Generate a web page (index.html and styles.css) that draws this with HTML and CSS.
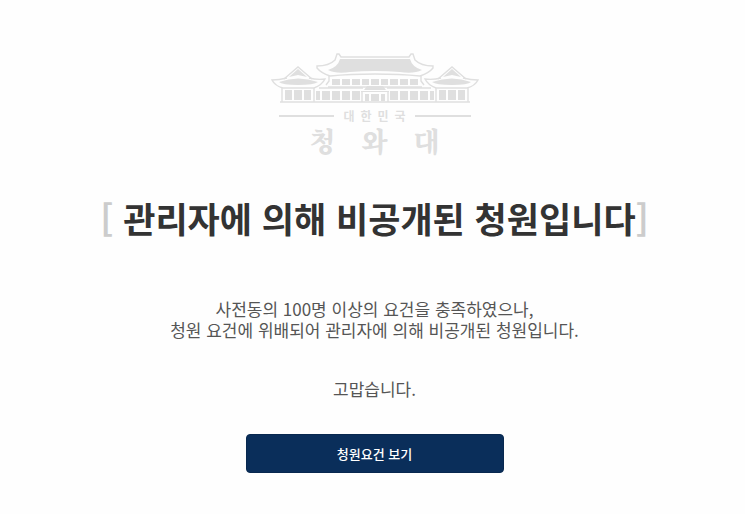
FILE: index.html
```html
<!DOCTYPE html>
<html lang="ko">
<head>
    <meta charset="UTF-8">
    <meta name="viewport" content="width=device-width, initial-scale=1.0">
    <title>청와대 국민청원</title>
    <link rel="stylesheet" href="styles.css">
</head>
<body>
    <main class="notice">
        <div class="logo">
            <svg class="logo-house" viewBox="0 0 210 54" aria-hidden="true">
                <defs>
                    <g id="half">
                        <!-- main hall roof -->
                        <path class="line" d="M105 7H71L69 4H67L65 10Q59 16 47 16V18Q51 23 60 26Q80 24 105 24"/>
                        <path class="fill" d="M105 9H70Q68 17 58 20Q66 24 80 22Q92 21 105 21Z"/>
                        <path class="line" d="M59 26V31L56 35M58 37H105"/>
                        <path class="fill" d="M62 29h8v6h-8zM72 29h8v6h-8zM82 29h8v6h-8zM92 29h7v6h-7zM101 29h4v6h-4z"/>
                        <!-- wing -->
                        <path class="line" d="M14 29L28 17L42 29"/>
                        <path class="line" d="M17 28Q9 30 2 30Q5 36 13 38H44Q52 35 55 29Q47 30 39 28"/>
                        <path class="fill" d="M19 27L28 19L37 27L28 25ZM9 32Q28 25 48 32Q44 35 28 35Q12 35 9 32Z"/>
                        <path class="line" d="M12 38V52M44 38V52M49 38H93"/>
                        <path class="fill" d="M15 40h7v10h-7zM24 40h8v10h-8zM34 40h7v10h-7zM46 41h4v9h-4zM52 41h8v9h-8zM62 41h8v9h-8zM72 41h8v9h-8zM82 41h8v9h-8z"/>
                        <!-- porch -->
                        <path class="fill" d="M105 36H97L94 40H105ZM91 41H105V42H91ZM95 44h4v7h-4zM101 44h4v7h-4z"/>
                        <path class="line" d="M92 42V52M10 52H105"/>
                    </g>
                </defs>
                <use href="#half"/>
                <use href="#half" transform="translate(210 0) scale(-1 1)"/>
            </svg>
            <div class="logo-country"><span>대</span><span>한</span><span>민</span><span>국</span></div>
            <div class="logo-name"><span>청</span><span>와</span><span>대</span></div>
        </div>
        <h1 class="title"><span class="bracket">[</span> 관리자에 의해 비공개된 청원입니다<span class="bracket">]</span></h1>
        <p class="message">사전동의 100명 이상의 요건을 충족하였으나,<br>청원 요건에 위배되어 관리자에 의해 비공개된 청원입니다.</p>
        <p class="thanks">고맙습니다.</p>
        <button class="guide-button" type="button">청원요건 보기</button>
    </main>
</body>
</html>
```
FILE: styles.css
```css
body {
    margin: 0;
    background-color: #fefefe;
    font-family: "Noto Sans CJK KR", sans-serif;
    color: #555;
}

.notice {
    display: flex;
    flex-direction: column;
    align-items: center;
    padding: 50px 14px 40px 18px;
    text-align: center;
}

.logo {
    width: 210px;
    color: #dfdfdf;
}

.logo-house {
    display: block;
    width: 100%;
}

.line {
    fill: none;
    stroke: #dfdfdf;
    stroke-width: 1.4;
}

.fill {
    fill: #dfdfdf;
}

.logo-country {
    display: flex;
    align-items: center;
    gap: 6px;
    padding: 0 9px;
    margin-top: 4px;
    font-size: 12px;
    font-weight: 700;
    line-height: 16px;
}

.logo-country::before,
.logo-country::after {
    content: "";
    flex: 1;
    height: 2px;
    margin-right: 3px;
    background-color: #dfdfdf;
}

.logo-country::after {
    margin: 0 0 0 3px;
}

.logo-name {
    display: flex;
    justify-content: space-between;
    padding: 0 40px;
    font-family: "Noto Serif CJK KR", "Noto Sans CJK KR", serif;
    font-size: 27px;
    font-weight: 900;
    line-height: 34px;
}

.title {
    margin: 34px 0 0;
    font-size: 35px;
    font-weight: 700;
    line-height: 52px;
    color: #333;
}

.bracket {
    color: #ccc;
}

.message,
.thanks {
    margin: 54px 0 0;
    font-size: 17px;
    line-height: 21px;
}

.thanks {
    margin-top: 38px;
}

.guide-button {
    width: 258px;
    max-width: 100%;
    margin-top: 35px;
    padding: 9px 16px;
    border: 1px solid #08284f;
    border-radius: 4px;
    background-color: #0a2e5a;
    color: #fff;
    font-family: inherit;
    font-size: 13px;
    font-weight: 500;
    line-height: 19px;
    cursor: pointer;
}
```
